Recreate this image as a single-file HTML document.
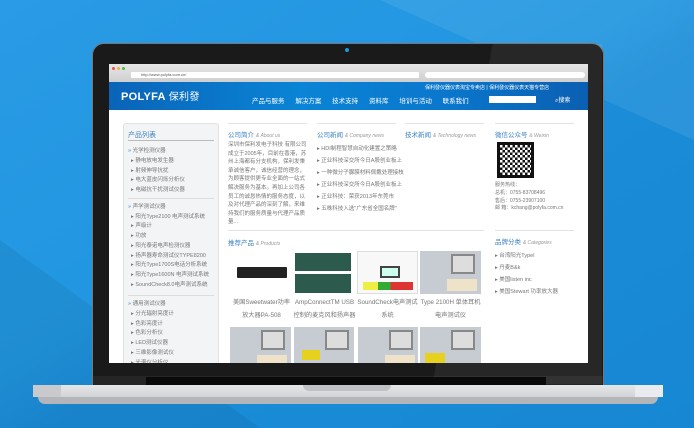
<!DOCTYPE html>
<html><head><meta charset="utf-8"><style>
*{margin:0;padding:0;box-sizing:border-box}
body{width:694px;height:428px;overflow:hidden;position:relative;font-family:"Liberation Sans","Noto Sans CJK SC",sans-serif;background:linear-gradient(150deg,#2a9be6 0%,#2196e0 45%,#1a8cd8 55%,#1787d3 100%)}
.a{position:absolute}
.t{font-size:5.5px;color:#777;white-space:nowrap}
.h{font-size:6.5px;color:#3b82c4;white-space:nowrap}
.h i{color:#999;font-size:5px}
.b{color:#3b82c4}
.line{height:1px;background:#e3e3e3}
.img{background:#eef0f2}
</style></head><body>
<div class="a" style="left:380px;top:0;width:0;height:0;border-top:140px solid rgba(255,255,255,0.08);border-left:314px solid transparent;left:380px"></div>
<div class="a" style="left:0;top:240px;width:0;height:0;border-bottom:188px solid rgba(0,0,0,0.06);border-right:260px solid transparent"></div>
<!-- bezel -->
<div class="a" style="left:92px;top:43px;width:512px;height:345px;background:#1a1a1a;border-radius:12px 12px 0 0;border:1px solid #777"></div>
<div class="a" style="left:93px;top:376px;width:510px;height:10px;background:#252525"></div>
<div class="a" style="left:345px;top:48px;width:4px;height:4px;border-radius:50%;background:#1b9ad6"></div>
<div class="a" style="left:420px;top:44px;width:182px;height:340px;background:linear-gradient(100deg,transparent 0,transparent 30%,rgba(255,255,255,0.06) 30%)"></div>
<!-- screen -->
<div class="a" style="left:109px;top:64px;width:479px;height:299px;background:#fff;overflow:hidden">
 <div class="a" style="left:0;top:0;width:479px;height:18px;background:linear-gradient(#e6e6e6,#cfcfcf)"></div>
 <div class="a" style="left:3px;top:3px;width:3px;height:3px;border-radius:50%;background:#e5534b"></div>
 <div class="a" style="left:8px;top:3px;width:3px;height:3px;border-radius:50%;background:#e5b53b"></div>
 <div class="a" style="left:13px;top:3px;width:3px;height:3px;border-radius:50%;background:#4bbb4b"></div>
 <div class="a" style="left:22px;top:8px;width:288px;height:6px;background:#fff;border-radius:1px;font-size:4px;color:#555;padding-left:10px;line-height:6px">http://www.polyfa.com.cn/</div>
 <div class="a" style="left:316px;top:8px;width:160px;height:6px;background:#fff;border-radius:3px"></div>
 <div class="a" style="left:0;top:18px;width:479px;height:28px;background:linear-gradient(90deg,#0a64b8,#0a84d6 40%,#0a77cc 70%,#0b5fb2)"></div>
 <div class="a" style="left:12px;top:24px;font-size:11px;font-weight:bold;color:#fff;letter-spacing:0.3px">POLYFA <span style="font-weight:normal;font-size:10px">保利發</span></div>
 <div class="a" style="left:316px;top:20px;font-size:5px;color:#fff;white-space:nowrap">保利發仪器仪表淘宝专卖店 | 保利發仪器仪表天猫专营店</div>
 <div class="a" style="left:143px;top:31px;font-size:6.5px;color:#fff;white-space:nowrap;word-spacing:0">产品与服务&nbsp;&nbsp;&nbsp;&nbsp;&nbsp;&nbsp;解决方案&nbsp;&nbsp;&nbsp;&nbsp;&nbsp;&nbsp;技术支持&nbsp;&nbsp;&nbsp;&nbsp;&nbsp;&nbsp;资料库&nbsp;&nbsp;&nbsp;&nbsp;&nbsp;&nbsp;培训与活动&nbsp;&nbsp;&nbsp;&nbsp;&nbsp;&nbsp;联系我们</div>
 <div class="a" style="left:380px;top:32px;width:47px;height:7px;background:#fff"></div>
 <div class="a" style="left:446px;top:31px;font-size:6px;color:#fff">⌕搜索</div>
 <!-- sidebar -->
 <div class="a" style="left:14px;top:59px;width:96px;height:260px;background:#f3f4f5;border:1px solid #e2e2e2;border-radius:3px"></div>
 <div class="a h" style="left:19px;top:66px;font-size:7px">产品列表</div>
 <div class="a" style="left:19px;top:76px;width:86px;height:1px;background:#bbb"></div>
 <div class="a t" style="left:19px;top:83px;line-height:9.8px"><span class="b">»</span> 光学检测仪器<br>&nbsp;&nbsp;▸ 静电放电发生器<br>&nbsp;&nbsp;▸ 射频伸导抗扰<br>&nbsp;&nbsp;▸ 电大蓝皮闪烁分析仪<br>&nbsp;&nbsp;▸ 电磁抗干扰测试仪器</div>
 <div class="a" style="left:19px;top:134px;width:86px;height:1px;background:#ddd"></div>
 <div class="a t" style="left:19px;top:139px;line-height:9.7px"><span class="b">»</span> 声学测试仪器<br>&nbsp;&nbsp;▸ 阳光Type2100 电声测试系统<br>&nbsp;&nbsp;▸ 声级计<br>&nbsp;&nbsp;▸ 功放<br>&nbsp;&nbsp;▸ 阳光泰诺电声检测仪器<br>&nbsp;&nbsp;▸ 扬声器寿命测试仪TYPE8200<br>&nbsp;&nbsp;▸ 阳光Type1700S电话分析系统<br>&nbsp;&nbsp;▸ 阳光Type1600N 电声测试系统<br>&nbsp;&nbsp;▸ SoundCheck8.0电声测试系统</div>
 <div class="a" style="left:19px;top:231px;width:86px;height:1px;background:#ddd"></div>
 <div class="a t" style="left:19px;top:236px;line-height:9.8px"><span class="b">»</span> 通用测试仪器<br>&nbsp;&nbsp;▸ 分光辐射亮度计<br>&nbsp;&nbsp;▸ 色彩亮度计<br>&nbsp;&nbsp;▸ 色彩分析仪<br>&nbsp;&nbsp;▸ LED测试仪器<br>&nbsp;&nbsp;▸ 三维影像测试仪<br>&nbsp;&nbsp;▸ 光谱仪分析仪</div>
 <!-- columns -->
 <div class="a line" style="left:119px;top:59px;width:79px"></div>
 <div class="a line" style="left:208px;top:59px;width:79px"></div>
 <div class="a line" style="left:296px;top:59px;width:79px"></div>
 <div class="a line" style="left:386px;top:59px;width:79px"></div>
 <div class="a h" style="left:119px;top:65px">公司简介 <i>&amp; About us</i></div>
 <div class="a h" style="left:208px;top:65px">公司新闻 <i>&amp; Company news</i></div>
 <div class="a h" style="left:296px;top:65px">技术新闻 <i>&amp; Technology news</i></div>
 <div class="a h" style="left:386px;top:65px">微信公众号 <i>&amp; Weixin</i></div>
 <div class="a t" style="left:119px;top:77px;width:82px;white-space:normal;line-height:8.6px">深圳市保利发电子科技 有限公司成立于2005年，目前在香港，苏州上海都有分支机构，保利发秉承诚信客户，诚信经营的理念，为顾客提供更专业全面的一站式解决服务为基本。再加上公司各员工的诚恳热情的服务态度，以及对代理产品的深刻了解，来维持我们的服务质量与代理产品质量...</div>
 <div class="a t" style="left:208px;top:79px;line-height:12px">▸ HDI制程智慧自动化建置之策略<br>▸ 正业科技深交所今日A股创业板上<br>▸ 一种微分子脲膜材料佩戴处理接枝<br>▸ 正业科技深交所今日A股创业板上<br>▸ 正业科技：荣获2013年东莞市<br>▸ 五株科技入选"广东省全国名牌"</div>
 <div class="a" style="left:388px;top:78px;width:37px;height:36px;background:repeating-conic-gradient(#111 0 25%,#fff 0 50%) 0 0/5px 5px;border:3px solid #111"></div>
 <div class="a t" style="left:386px;top:118px;line-height:7.8px;font-size:5px">服务热线：<br>总机：0755-83708496<br>售后：0755-23907100<br>邮 箱：kchang@polyfa.com.cn</div>
 <div class="a line" style="left:119px;top:166px;width:256px"></div>
 <div class="a line" style="left:386px;top:166px;width:79px"></div>
 <div class="a h" style="left:119px;top:173px">推荐产品 <i>&amp; Products</i></div>
 <div class="a h" style="left:386px;top:172px">品牌分类 <i>&amp; Categories</i></div>
 <div class="a t" style="left:386px;top:186px;line-height:12px">▸ 台湾阳光Typel<br>▸ 丹麦B&amp;k<br>▸ 美国listen inc<br>▸ 美国Stewart 功率放大器</div>
 <div class="a img" style="left:121px;top:187px;width:61px;height:43px;background:#fff"><div class="a" style="left:7px;top:16px;width:50px;height:11px;background:#222;border-radius:1px"></div></div>
 <div class="a img" style="left:184px;top:187px;width:60px;height:43px;background:#fff"><div class="a" style="left:2px;top:2px;width:56px;height:18px;background:#2c5a4c"></div><div class="a" style="left:2px;top:23px;width:56px;height:19px;background:#2c5a4c"></div></div>
 <div class="a img" style="left:248px;top:187px;width:61px;height:43px;background:#f8f8f8;border:1px solid #ddd"><div class="a" style="left:22px;top:14px;width:20px;height:12px;border:2px solid #444;background:#cfe"></div><div class="a" style="left:5px;top:30px;width:50px;height:8px;background:linear-gradient(90deg,#ee4 0 30%,#3a3 30% 55%,#d33 55%)"></div></div>
 <div class="a img" style="left:311px;top:187px;width:61px;height:43px;background:#c7ccd3"><div class="a" style="left:31px;top:3px;width:24px;height:20px;background:#ddd;border:2px solid #888"></div><div class="a" style="left:27px;top:28px;width:30px;height:12px;background:#eee3c8"></div></div>
 <div class="a t" style="left:121px;top:232px;width:252px;font-size:6.2px;line-height:13px;white-space:normal">
  <div class="a" style="left:0;width:63px;text-align:center">美国Sweetwater功率放大器PA-508</div>
  <div class="a" style="left:63px;width:63px;text-align:center">AmpConnectTM USB 控制的麦克风和扬声器</div>
  <div class="a" style="left:126px;width:63px;text-align:center">SoundCheck电声测试系统</div>
  <div class="a" style="left:189px;width:63px;text-align:center">Type 2100H 单体耳机电声测试仪</div>
 </div>
 <div class="a img" style="left:121px;top:263px;width:61px;height:40px;background:#c7ccd3"><div class="a" style="left:31px;top:3px;width:24px;height:20px;background:#ddd;border:2px solid #888"></div><div class="a" style="left:27px;top:28px;width:30px;height:12px;background:#eee3c8"></div></div>
 <div class="a img" style="left:185px;top:263px;width:60px;height:40px;background:#c7ccd3"><div class="a" style="left:31px;top:3px;width:24px;height:20px;background:#ddd;border:2px solid #888"></div><div class="a" style="left:8px;top:23px;width:18px;height:10px;background:#e6d21e"></div></div>
 <div class="a img" style="left:249px;top:263px;width:60px;height:40px;background:#c7ccd3"><div class="a" style="left:31px;top:3px;width:24px;height:20px;background:#ddd;border:2px solid #888"></div><div class="a" style="left:27px;top:28px;width:30px;height:12px;background:#eee3c8"></div></div>
 <div class="a img" style="left:311px;top:263px;width:61px;height:40px;background:#c7ccd3"><div class="a" style="left:31px;top:3px;width:24px;height:20px;background:#ddd;border:2px solid #888"></div><div class="a" style="left:5px;top:26px;width:20px;height:10px;background:#e6d21e"></div></div>
</div>
<!-- bottom bezel hinge -->
<div class="a" style="left:146px;top:377px;width:400px;height:8px;background:#0a0a0a"></div>
<!-- base -->
<div class="a" style="left:33px;top:385px;width:630px;height:12px;background:linear-gradient(#e6e7e9,#d2d3d6);border-radius:2px 2px 0 0"></div>
<div class="a" style="left:33px;top:385px;width:28px;height:12px;background:#c9cacd"></div>
<div class="a" style="left:635px;top:385px;width:28px;height:12px;background:#eaebee"></div>
<div class="a" style="left:38px;top:397px;width:620px;height:7px;background:#b3b5b8;border-radius:0 0 30px 30px"></div>
<div class="a" style="left:303px;top:385px;width:88px;height:6px;background:#bfc1c4;border-radius:0 0 6px 6px"></div>
</body></html>
